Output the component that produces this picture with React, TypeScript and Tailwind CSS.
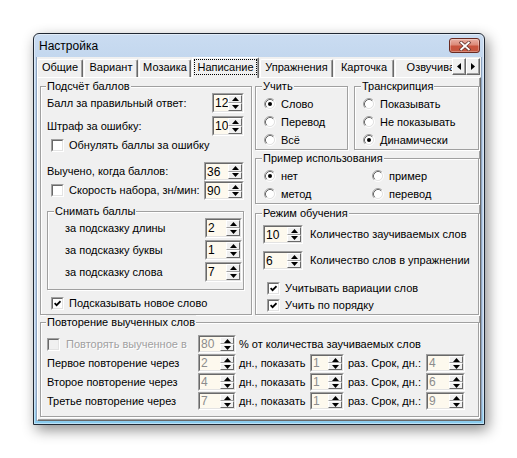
import React from "react";

function Tri({ dir }: { dir: "up" | "down" | "left" | "right" }) {
  if (dir === "up" || dir === "down") {
    return (
      <svg width="7" height="4" viewBox="0 0 7 4" className="shrink-0">
        <polygon points={dir === "up" ? "3.5,0 7,4 0,4" : "0,0 7,0 3.5,4"} fill="#000" />
      </svg>
    );
  }
  return (
    <svg width="4" height="7" viewBox="0 0 4 7" className="shrink-0">
      <polygon points={dir === "left" ? "4,0 4,7 0,3.5" : "0,0 4,3.5 0,7"} fill="#000" />
    </svg>
  );
}

function Spin({ value, cls, gray }: { value: string; cls: string; gray?: boolean }) {
  return (
    <div className={`${cls} shrink-0 flex border border-t-[#a0a0a0] border-l-[#a0a0a0] border-r-white border-b-white`}>
      <div className="flex flex-1 min-w-0 border border-t-[#696969] border-l-[#696969] border-r-[#e3e3e3] border-b-[#e3e3e3] bg-[#fdf9ee]">
        <div className={`flex-1 flex items-center pl-[1px] text-[12px] ${gray ? "text-[#8c8c8c]" : "text-black"}`}>{value}</div>
        <div className="w-[14px] flex flex-col bg-[#f0f0f0]">
          <div className="flex-1 flex items-center justify-center border border-t-white border-l-white border-r-[#696969] border-b-[#a0a0a0]">
            <Tri dir="up" />
          </div>
          <div className="flex-1 flex items-center justify-center border border-t-white border-l-white border-r-[#696969] border-b-[#696969]">
            <Tri dir="down" />
          </div>
        </div>
      </div>
    </div>
  );
}

function Check({ on, disabled }: { on?: boolean; disabled?: boolean }) {
  return (
    <span className="w-[13px] h-[13px] shrink-0 flex border border-t-[#a0a0a0] border-l-[#a0a0a0] border-r-white border-b-white">
      <span
        className={`flex-1 flex items-center justify-center border border-t-[#696969] border-l-[#696969] border-r-[#e3e3e3] border-b-[#e3e3e3] ${
          disabled ? "bg-[#f0f0f0]" : "bg-white"
        }`}
      >
        {on && (
          <svg width="7" height="7" viewBox="0 0 7 7">
            <path d="M0.6 3.2 L2.6 5.2 L6.5 1.2" stroke="#000" strokeWidth="1.7" fill="none" />
          </svg>
        )}
      </span>
    </span>
  );
}

function Radio({ on }: { on?: boolean }) {
  return (
    <svg width="12" height="12" viewBox="0 0 12 12" className="shrink-0">
      <circle cx="6" cy="6" r="4.2" fill="#fff" />
      <path d="M2.11 9.89 A5.5 5.5 0 0 1 9.89 2.11" stroke="#a0a0a0" strokeWidth="1" fill="none" />
      <path d="M9.89 2.11 A5.5 5.5 0 0 1 2.11 9.89" stroke="#fff" strokeWidth="1" fill="none" />
      <path d="M2.82 9.18 A4.5 4.5 0 0 1 9.18 2.82" stroke="#696969" strokeWidth="1" fill="none" />
      <path d="M9.18 2.82 A4.5 4.5 0 0 1 2.82 9.18" stroke="#e3e3e3" strokeWidth="1" fill="none" />
      {on && <circle cx="6" cy="6" r="2" fill="#000" />}
    </svg>
  );
}

function Group({
  title,
  cls,
  legendCls = "ml-[5px]",
  children,
}: {
  title: string;
  cls: string;
  legendCls?: string;
  children: React.ReactNode;
}) {
  return (
    <fieldset className={`${cls} shrink-0 m-0 p-0 min-w-0 border border-[#a0a0a0] shadow-[inset_1px_1px_0_#fff,1px_1px_0_#fff]`}>
      <legend className={`${legendCls} px-[1px] leading-[14px] bg-[#f0f0f0]`}>{title}</legend>
      {children}
    </fieldset>
  );
}

function RadioRow({ on, label }: { on?: boolean; label: string }) {
  return (
    <div className="h-[18px] flex items-center gap-[5px]">
      <Radio on={on} />
      <span>{label}</span>
    </div>
  );
}

function CloseBtn() {
  return (
    <div className="w-[31px] h-[15px] rounded-[3px] border border-[#6a2b22] bg-[linear-gradient(to_bottom,#eab1a5_0%,#dc8a78_45%,#c9533d_55%,#c4563f_100%)] shadow-[inset_0_0_0_1px_rgba(255,255,255,0.3)] flex items-center justify-center">
      <svg width="12" height="10" viewBox="0 0 12 10">
        <path d="M2.2 1.6 L9.8 8.4 M9.8 1.6 L2.2 8.4" stroke="#6b3a33" strokeWidth="3.4" strokeLinecap="square" />
        <path d="M2.2 1.6 L9.8 8.4 M9.8 1.6 L2.2 8.4" stroke="#ffffff" strokeWidth="1.8" strokeLinecap="square" />
      </svg>
    </div>
  );
}

const tabs = [
  { t: "Общие", w: "w-[46px]" },
  { t: "Вариант", w: "w-[54px]" },
  { t: "Мозаика", w: "w-[52px]" },
  { t: "Написание", w: "w-[67px]", sel: true },
  { t: "Упражнения", w: "w-[73px]" },
  { t: "Карточка", w: "w-[60px]" },
  { t: "Озвучивание", w: "w-[90px]" },
];

function TabStrip() {
  return (
    <div className="h-[21px] shrink-0 -mb-[1px] relative z-10 flex">
      <div className="w-[415px] h-full overflow-hidden flex items-end gap-[1px]">
        {tabs.map((tb) =>
          tb.sel ? (
            <div
              key={tb.t}
              className={`${tb.w} h-[21px] shrink-0 flex items-center justify-center pb-[2px] bg-[#f0f0f0] border-t border-l border-r border-t-white border-l-white border-r-[#696969] rounded-t-[2px] shadow-[inset_-1px_0_0_#a0a0a0]`}
            >
              <span className="border border-dotted border-black px-[2px] leading-[14px]">{tb.t}</span>
            </div>
          ) : (
            <div
              key={tb.t}
              className={`${tb.w} h-[18px] mb-[1px] shrink-0 flex items-center justify-center pb-[2px] bg-[#f0f0f0] border-t border-l border-r border-t-white border-l-white border-r-[#696969] rounded-t-[2px] shadow-[inset_-1px_0_0_#a0a0a0] whitespace-nowrap`}
            >
              {tb.t}
            </div>
          )
        )}
      </div>
      <div className="flex mt-[1px] h-[17px]">
        <div className="w-[14px] h-[17px] flex items-center justify-center bg-[#f0f0f0] border border-t-white border-l-white border-r-[#696969] border-b-[#696969] shadow-[inset_-1px_-1px_0_#a0a0a0]">
          <Tri dir="left" />
        </div>
        <div className="w-[14px] h-[17px] flex items-center justify-center bg-[#f0f0f0] border border-t-white border-l-white border-r-[#696969] border-b-[#696969] shadow-[inset_-1px_-1px_0_#a0a0a0]">
          <Tri dir="right" />
        </div>
      </div>
    </div>
  );
}

function LeftGroup() {
  return (
    <Group title="Подсчёт баллов" cls="w-[212px] h-[236px]">
      <div className="pl-[6px] pr-[7px] flex flex-col">
        <div className="h-[20px] flex items-center justify-between">
          <span>Балл за правильный ответ:</span>
          <Spin value="12" cls="w-[32px] h-[20px]" />
        </div>
        <div className="h-[20px] mt-[3px] flex items-center justify-between">
          <span>Штраф за ошибку:</span>
          <Spin value="10" cls="w-[32px] h-[20px]" />
        </div>
        <div className="h-[17px] mt-[1px] pl-[4px] flex items-center gap-[5px]">
          <Check />
          <span>Обнулять баллы за ошибку</span>
        </div>
        <div className="h-[19px] mt-[8px] flex items-center justify-between">
          <span>Выучено, когда баллов:</span>
          <Spin value="36" cls="w-[40px] h-[19px]" />
        </div>
        <div className="h-[19px] flex items-center justify-between">
          <div className="pl-[4px] flex items-center gap-[5px]">
            <Check />
            <span>Скорость набора, зн/мин:</span>
          </div>
          <Spin value="90" cls="w-[40px] h-[19px]" />
        </div>
        <Group title="Снимать баллы" cls="w-full h-[86px] mt-[4px]" legendCls="ml-[6px]">
          <div className="pl-[17px] pr-[1px] flex flex-col gap-[2px]">
            <div className="h-[20px] flex items-center justify-between">
              <span>за подсказку длины</span>
              <Spin value="2" cls="w-[37px] h-[20px]" />
            </div>
            <div className="h-[20px] flex items-center justify-between">
              <span>за подсказку буквы</span>
              <Spin value="1" cls="w-[37px] h-[20px]" />
            </div>
            <div className="h-[20px] flex items-center justify-between">
              <span>за подсказку слова</span>
              <Spin value="7" cls="w-[37px] h-[20px]" />
            </div>
          </div>
        </Group>
        <div className="h-[17px] mt-[5px] pl-[4px] flex items-center gap-[5px]">
          <Check on />
          <span>Подсказывать новое слово</span>
        </div>
      </div>
    </Group>
  );
}

function RightCol() {
  return (
    <div className="w-[224px] flex flex-col">
      <div className="flex gap-[6px]">
        <Group title="Учить" cls="w-[93px] h-[71px]" legendCls="ml-[6px]">
          <div className="pl-[8px] pt-[2px] flex flex-col">
            <RadioRow on label="Слово" />
            <RadioRow label="Перевод" />
            <RadioRow label="Всё" />
          </div>
        </Group>
        <Group title="Транскрипция" cls="w-[125px] h-[71px]" legendCls="ml-[6px]">
          <div className="pl-[8px] pt-[2px] flex flex-col">
            <RadioRow label="Показывать" />
            <RadioRow label="Не показывать" />
            <RadioRow on label="Динамически" />
          </div>
        </Group>
      </div>
      <Group title="Пример использования" cls="w-full h-[53px] mt-[1px]" legendCls="ml-[6px]">
        <div className="pl-[8px] pt-[2px] grid grid-cols-[108px_1fr]">
          <RadioRow on label="нет" />
          <RadioRow label="пример" />
          <RadioRow label="метод" />
          <RadioRow label="перевод" />
        </div>
      </Group>
      <Group title="Режим обучения" cls="w-full h-[109px] mt-[2px]" legendCls="ml-[6px]">
        <div className="pl-[7px] flex flex-col">
          <div className="h-[19px] mt-[5px] flex items-center gap-[7px]">
            <Spin value="10" cls="w-[40px] h-[19px]" />
            <span>Количество заучиваемых слов</span>
          </div>
          <div className="h-[19px] mt-[7px] flex items-center gap-[7px]">
            <Spin value="6" cls="w-[40px] h-[19px]" />
            <span>Количество слов в упражнении</span>
          </div>
          <div className="h-[17px] mt-[10px] pl-[4px] flex items-center gap-[5px]">
            <Check on />
            <span>Учитывать вариации слов</span>
          </div>
          <div className="h-[17px] pl-[4px] flex items-center gap-[5px]">
            <Check on />
            <span>Учить по порядку</span>
          </div>
        </div>
      </Group>
    </div>
  );
}

function RepeatRow({ label, a, b, c }: { label: string; a: string; b: string; c: string }) {
  return (
    <div className="h-[18px] mt-[1px] flex items-center">
      <span className="w-[151px] shrink-0">{label}</span>
      <Spin value={a} cls="w-[38px] h-[18px]" gray />
      <span className="w-[74px] shrink-0 pl-[3px] whitespace-nowrap">дн., показать</span>
      <Spin value={b} cls="w-[34px] h-[18px]" gray />
      <span className="w-[82px] shrink-0 pl-[4px] whitespace-nowrap">раз. Срок, дн.:</span>
      <Spin value={c} cls="w-[39px] h-[18px]" gray />
    </div>
  );
}

function BottomGroup() {
  return (
    <Group title="Повторение выученных слов" cls="w-[439px] h-[102px]">
      <div className="pl-[6px] pt-[6px] flex flex-col">
        <div className="h-[18px] flex items-center">
          <div className="w-[151px] shrink-0 flex items-center gap-[6px]">
            <Check disabled />
            <span className="text-[#a0a0a0] [text-shadow:1px_1px_0_#fff]">Повторять выученное в</span>
          </div>
          <Spin value="80" cls="w-[38px] h-[18px]" gray />
          <span className="pl-[3px] whitespace-nowrap">% от количества заучиваемых слов</span>
        </div>
        <RepeatRow label="Первое повторение через" a="2" b="1" c="4" />
        <RepeatRow label="Второе повторение через" a="4" b="1" c="6" />
        <RepeatRow label="Третье повторение через" a="7" b="1" c="9" />
      </div>
    </Group>
  );
}

export default function App() {
  return (
    <div className="w-[517px] h-[458px] bg-white pt-[33px] pl-[33px] [font-family:'Liberation_Sans',Arial,sans-serif] text-[11px] text-black">
      <div className="w-[452px] h-[392px] flex flex-col border border-[#202833] rounded-t-[6px] bg-[linear-gradient(to_bottom,#cadcf1_0%,#b9d0ea_15%,#b4cce8_92%,#86cbee_100%)] shadow-[inset_0_0_0_1px_rgba(255,255,255,0.45),3px_5px_14px_rgba(0,0,0,0.45)]">
        <div className="h-[23px] shrink-0 flex items-center justify-between pl-[5px] pr-[4px]">
          <span className="text-[12px]">Настройка</span>
          <CloseBtn />
        </div>
        <div className="flex-1 mx-[2px] mb-[3px] flex flex-col bg-[#f0f0f0] border-x border-[#8ea4c0]">
          <TabStrip />
          <div className="flex-1 flex flex-col border border-t-white border-l-white border-r-[#696969] border-b-[#696969] shadow-[inset_-1px_-1px_0_#a0a0a0] pl-[2px] pr-[1px] pt-[1px]">
            <div className="flex gap-[3px]">
              <LeftGroup />
              <RightCol />
            </div>
            <BottomGroup />
          </div>
        </div>
      </div>
    </div>
  );
}
